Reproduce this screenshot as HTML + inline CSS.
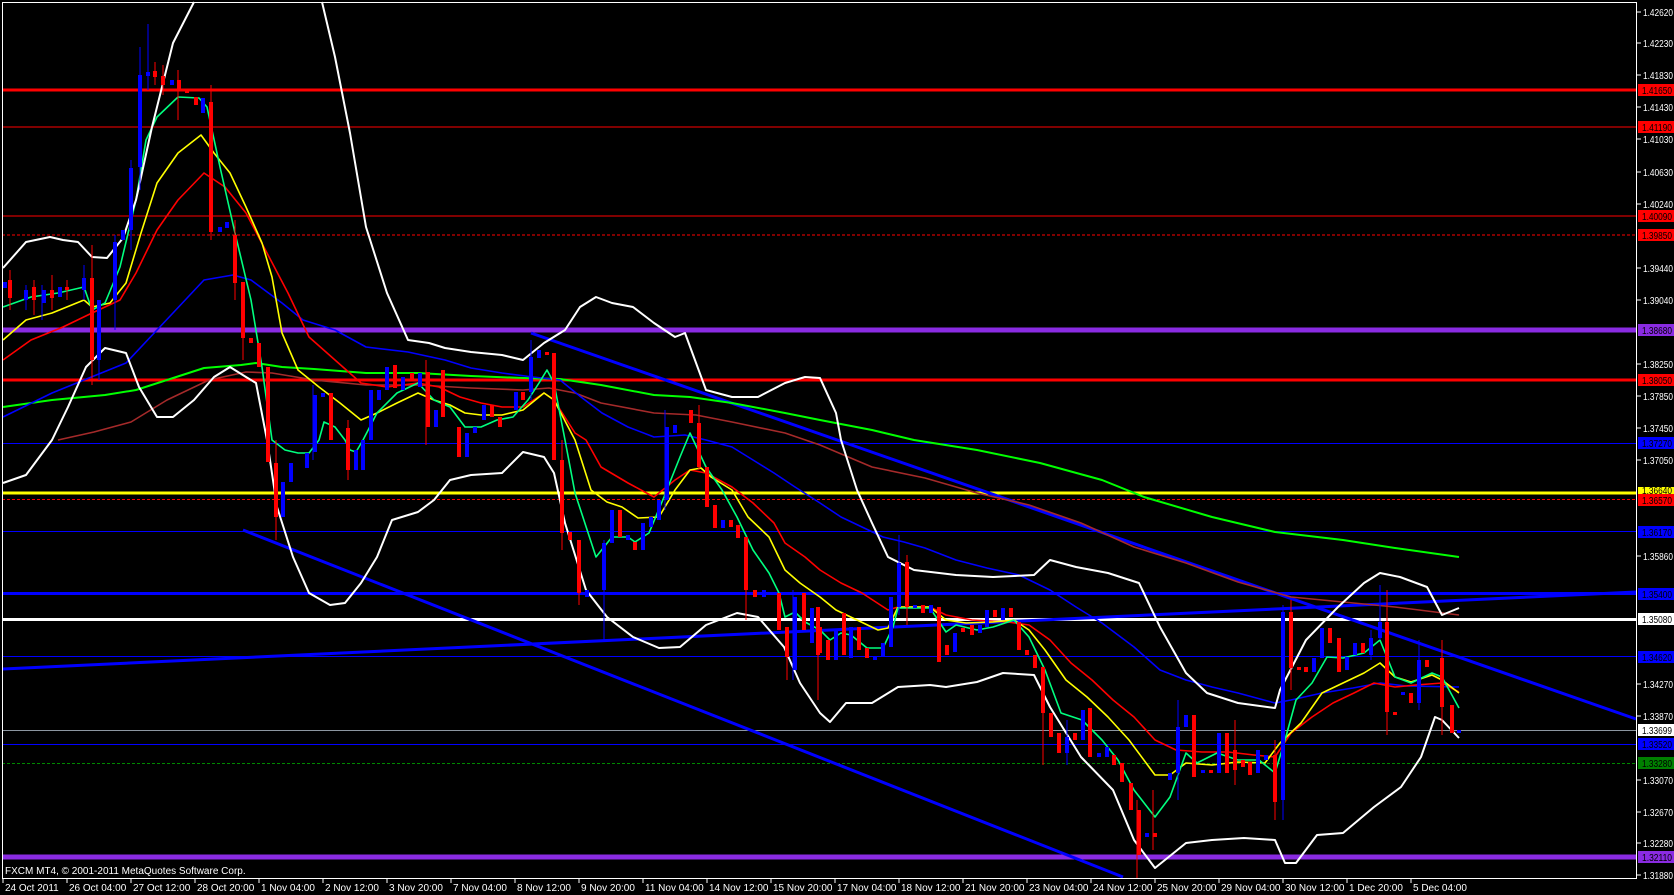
<!DOCTYPE html>
<html><head><meta charset="utf-8"><style>
html,body{margin:0;padding:0;background:#000;width:1674px;height:895px;overflow:hidden}
svg{display:block}
text{font-family:"Liberation Sans",sans-serif;font-size:10px}
</style></head><body>
<svg width="1674" height="895" viewBox="0 0 1674 895" xmlns="http://www.w3.org/2000/svg">
<rect width="1674" height="895" fill="#000"/>
<g fill="none">
<line x1="2" y1="90" x2="1636" y2="90" stroke="#f00" stroke-width="3"/>
<line x1="2" y1="127" x2="1636" y2="127" stroke="#f00" stroke-width="1"/>
<line x1="2" y1="216" x2="1636" y2="216" stroke="#f00" stroke-width="1"/>
<line x1="2" y1="235" x2="1636" y2="235" stroke="#f00" stroke-width="1" stroke-dasharray="3,2"/>
<line x1="2" y1="330" x2="1636" y2="330" stroke="#8a2be2" stroke-width="5"/>
<line x1="2" y1="380" x2="1636" y2="380" stroke="#f00" stroke-width="3"/>
<line x1="2" y1="443.5" x2="1636" y2="443.5" stroke="#00f" stroke-width="1"/>
<line x1="2" y1="493" x2="1636" y2="493" stroke="#ff0" stroke-width="3"/>
<line x1="2" y1="499.5" x2="1636" y2="499.5" stroke="#f00" stroke-width="1" stroke-dasharray="3,2"/>
<line x1="2" y1="531.5" x2="1636" y2="531.5" stroke="#00f" stroke-width="1"/>
<line x1="2" y1="593.5" x2="1636" y2="593.5" stroke="#00f" stroke-width="3"/>
<line x1="2" y1="619.5" x2="1636" y2="619.5" stroke="#fff" stroke-width="3"/>
<line x1="2" y1="656.5" x2="1636" y2="656.5" stroke="#00f" stroke-width="1"/>
<line x1="2" y1="730.5" x2="1636" y2="730.5" stroke="#8c96a0" stroke-width="1"/>
<line x1="2" y1="744.5" x2="1636" y2="744.5" stroke="#00f" stroke-width="1"/>
<line x1="2" y1="763.5" x2="1636" y2="763.5" stroke="#080" stroke-width="1" stroke-dasharray="3,2"/>
<line x1="2" y1="857" x2="1636" y2="857" stroke="#8a2be2" stroke-width="5"/>
</g>
<g stroke="#00f" stroke-width="3" fill="none">
<line x1="531" y1="333" x2="1636" y2="719"/>
<line x1="243" y1="530" x2="1123" y2="877"/>
<line x1="3" y1="669" x2="1636" y2="592"/>
</g>
<g fill="none" stroke-width="1.6" stroke-linejoin="round">
<polyline stroke="#a52a2a" points="58,440 94,432 131,422 167,400 209,380 246,372 272,373 314,380 366,385 418,385 471,388 523,390 549,388 575,393 601,403 654,413 696,415 732,422 785,433 820,445 872,467 925,478 977,493 1029,505 1081,523 1134,547 1186,563 1238,582 1291,597 1343,602 1395,607 1459,615"/>
<polyline stroke="#0f0" stroke-width="2" points="3,407 52,400 105,395 136,390 167,380 204,368 241,365 256,363 282,367 314,369 366,373 418,373 471,376 523,378 560,379 601,385 654,395 690,397 732,403 785,413 820,420 872,430 914,440 977,450 1040,463 1102,480 1144,497 1212,517 1275,532 1343,540 1395,548 1459,557"/>
<polyline stroke="#00f" points="3,417 52,393 84,380 126,363 157,330 204,280 233,275 251,280 282,303 303,320 335,330 366,347 408,352 445,360 471,368 502,373 533,377 560,380 581,397 602,413 628,427 654,437 685,435 706,440 732,447 753,460 774,473 795,487 820,503 841,517 862,527 883,537 904,542 925,548 956,560 987,568 1019,575 1050,590 1076,607 1102,623 1134,647 1160,670 1186,680 1212,687 1238,693 1275,703 1291,700 1322,693 1353,688 1380,683 1406,686 1459,687"/>
<polyline stroke="#f00" points="3,360 31,340 63,327 92,313 105,307 120,300 136,273 157,230 178,200 204,173 225,187 246,213 267,253 288,293 309,337 335,360 361,383 387,387 418,383 439,387 460,397 481,403 502,407 523,407 544,393 554,400 575,433 586,440 601,467 628,483 654,497 675,480 690,470 706,473 732,487 753,503 774,523 785,543 805,557 820,570 841,583 862,593 888,610 898,607 930,607 946,615 972,620 1008,622 1029,625 1050,640 1071,663 1092,680 1113,700 1134,717 1155,740 1176,750 1202,752 1228,752 1254,755 1275,757 1291,733 1312,717 1333,703 1354,693 1374,683 1395,687 1416,685 1442,683 1459,692"/>
<polyline stroke="#ff0" points="3,340 26,320 52,313 84,300 92,307 110,303 126,283 141,233 157,183 178,153 201,135 214,153 230,173 246,207 262,243 272,277 282,333 298,370 319,387 340,403 361,420 377,413 397,403 418,393 434,400 450,405 465,413 481,415 502,415 523,410 544,393 554,400 575,440 591,490 607,502 622,507 638,518 659,517 675,490 690,470 701,468 711,477 732,490 748,517 769,537 785,570 800,583 820,597 836,610 857,620 878,630 888,628 898,607 930,607 946,620 966,623 993,622 1014,620 1029,630 1045,650 1066,680 1087,697 1108,717 1129,740 1155,775 1170,775 1186,763 1212,765 1238,762 1265,763 1280,743 1301,723 1322,693 1343,683 1364,673 1380,663 1395,677 1411,682 1432,675 1442,680 1459,693"/>
<polyline stroke="#00ff7f" points="3,307 31,297 58,293 84,287 92,310 105,303 120,267 136,200 146,140 157,117 178,97 199,98 207,107 220,167 235,233 251,300 262,367 272,440 285,450 298,453 309,453 319,440 324,422 335,427 345,440 350,450 356,452 363,440 377,413 397,393 418,383 434,400 450,407 465,427 481,427 497,420 513,417 528,400 539,383 547,370 554,383 565,440 575,493 596,557 612,537 628,537 635,542 649,533 664,497 680,457 690,433 706,467 722,490 737,517 753,550 769,573 779,593 785,617 795,612 805,622 820,630 830,640 841,633 851,635 867,648 883,648 893,627 898,608 930,608 946,632 956,625 977,630 993,627 1014,620 1029,637 1045,670 1061,713 1082,720 1102,740 1118,760 1134,790 1155,817 1170,797 1186,753 1197,763 1217,753 1238,760 1259,760 1275,773 1285,740 1296,700 1312,683 1327,657 1343,658 1364,653 1380,640 1395,677 1411,683 1432,673 1442,677 1459,708"/>
</g>
<g fill="none" stroke="#fff" stroke-width="2" stroke-linejoin="round">
<polyline points="3,268 26,242 50,237 63,240 78,242 92,257 107,258 123,238 136,200 152,127 173,43 194,2"/>
<polyline points="322,2 335,57 350,133 366,227 387,293 408,340 429,343 445,348 471,352 502,355 523,360 544,343 565,330 580,307 596,297 612,303 633,307 654,323 675,337 685,333 706,390 732,397 758,397 785,383 805,377 820,378 836,413 841,440 857,490 872,523 888,557 914,570 956,575 993,577 1034,575 1050,560 1076,567 1108,573 1139,583 1160,627 1186,673 1207,693 1238,703 1275,708 1280,690 1306,640 1338,607 1364,583 1380,573 1400,577 1427,587 1442,615 1459,608"/>
<polyline points="3,483 26,475 52,440 68,407 86,367 105,348 126,353 139,387 157,417 173,417 194,400 214,377 230,367 246,377 256,383 267,440 277,507 293,557 309,593 330,605 345,603 361,583 377,557 392,520 418,512 434,500 450,480 471,475 502,473 523,452 544,457 554,473 565,523 586,590 607,617 633,637 659,648 680,647 706,625 737,613 758,617 784,647 800,683 820,713 830,722 846,703 872,703 898,687 930,685 946,687 977,682 1003,673 1034,675 1050,707 1081,757 1113,790 1134,840 1155,868 1186,843 1212,840 1244,838 1275,840 1285,863 1296,863 1317,835 1343,833 1374,807 1401,787 1421,757 1435,717 1442,720 1459,738"/>
</g>
<path fill="none" stroke="#f00" stroke-width="1" d="M92 245V385M211 85V240M235 220V300M243 282V360M276 440V540M699 405V470M746 537V620M787 627V680M818 640V700M1043 667V765M1137 800V880M1153 790V850M1275 740V820M1387 590V735M1442 640V735M1291 600V690M907 555V625M426 360V445M348 420V480M579 540V605M562 440V550M1235 720V785M178 70V120M163 65V95M155 62V85M10 270V310M34 280V315M52 275V310M67 280V300"/>
<path fill="none" stroke="#00f" stroke-width="1" d="M140 47V190M148 24V90M131 160V250M115 235V330M99 300V380M313 385V460M665 410V510M793 590V680M899 535V615M1283 605V820M1371 630V660M1380 585V640M1419 640V710M1178 700V800M1067 720V765M604 540V640M531 340V400M42 285V320M84 265V300M26 285V310"/>
<path fill="#f00" d="M90 278h4V360h-4ZM153 71h4V77h-4ZM161 76h4V85h-4ZM177 80h4V90h-4ZM185 90h4V93h-4ZM194 97h4V105h-4ZM209 102h4V232h-4ZM233 235h4V283h-4ZM241 282h4V338h-4ZM249 338h4V343h-4ZM257 343h4V367h-4ZM266 367h4V462h-4ZM8 280h4V298h-4ZM32 287h4V300h-4ZM50 290h4V298h-4ZM65 287h4V290h-4ZM274 463h4V517h-4ZM346 428h4V470h-4ZM552 353h4V460h-4ZM560 460h4V533h-4ZM568 532h4V540h-4ZM577 540h4V593h-4ZM618 510h4V537h-4ZM633 542h4V550h-4ZM697 423h4V467h-4ZM689 410h4V423h-4ZM705 467h4V507h-4ZM713 505h4V528h-4ZM729 520h4V527h-4ZM736 525h4V538h-4ZM744 537h4V590h-4ZM753 590h4V597h-4ZM777 593h4V630h-4ZM785 627h4V657h-4ZM802 593h4V630h-4ZM816 607h4V655h-4ZM329 393h4V440h-4ZM393 365h4V388h-4ZM410 373h4V380h-4ZM426 372h4V427h-4ZM441 370h4V417h-4ZM457 427h4V457h-4ZM490 405h4V417h-4ZM498 417h4V427h-4ZM521 392h4V400h-4ZM545 352h4V355h-4ZM818 627h4V653h-4ZM826 640h4V660h-4ZM842 613h4V655h-4ZM857 627h4V650h-4ZM865 648h4V658h-4ZM905 562h4V607h-4ZM921 605h4V613h-4ZM937 607h4V662h-4ZM945 645h4V655h-4ZM961 628h4V632h-4ZM970 625h4V635h-4ZM993 610h4V617h-4ZM1009 608h4V617h-4ZM1017 622h4V650h-4ZM1025 650h4V655h-4ZM1033 655h4V668h-4ZM1041 667h4V713h-4ZM1049 713h4V737h-4ZM1057 733h4V753h-4ZM1073 733h4V740h-4ZM1088 708h4V757h-4ZM1112 755h4V765h-4ZM1120 763h4V782h-4ZM1129 783h4V810h-4ZM1137 810h4V855h-4ZM1153 833h4V837h-4ZM1192 715h4V777h-4ZM1209 770h4V773h-4ZM1225 733h4V773h-4ZM1233 750h4V770h-4ZM1241 760h4V767h-4ZM1248 762h4V775h-4ZM1273 755h4V802h-4ZM1289 612h4V668h-4ZM1297 667h4V670h-4ZM1304 667h4V672h-4ZM1328 628h4V643h-4ZM1337 638h4V672h-4ZM1361 643h4V653h-4ZM1385 622h4V712h-4ZM1393 712h4V715h-4ZM1409 693h4V703h-4ZM1425 660h4V667h-4ZM1440 658h4V707h-4ZM1450 705h4V733h-4Z"/>
<path fill="#00f" d="M97 300h4V360h-4ZM113 242h4V300h-4ZM121 230h4V240h-4ZM129 168h4V230h-4ZM138 75h4V167h-4ZM146 72h4V76h-4ZM170 80h4V85h-4ZM201 98h4V113h-4ZM218 227h4V232h-4ZM225 222h4V228h-4ZM3 282h4V288h-4ZM24 290h4V300h-4ZM42 290h4V303h-4ZM58 287h4V297h-4ZM82 278h4V290h-4ZM281 482h4V517h-4ZM289 463h4V482h-4ZM305 453h4V468h-4ZM313 395h4V452h-4ZM321 393h4V397h-4ZM354 450h4V470h-4ZM361 440h4V470h-4ZM369 390h4V440h-4ZM377 390h4V400h-4ZM385 367h4V390h-4ZM401 377h4V390h-4ZM418 373h4V387h-4ZM434 410h4V427h-4ZM465 433h4V457h-4ZM473 427h4V433h-4ZM482 405h4V420h-4ZM514 392h4V410h-4ZM529 357h4V392h-4ZM537 350h4V358h-4ZM585 590h4V597h-4ZM602 543h4V590h-4ZM610 510h4V543h-4ZM626 535h4V540h-4ZM641 523h4V550h-4ZM649 517h4V527h-4ZM657 500h4V520h-4ZM665 427h4V500h-4ZM673 425h4V433h-4ZM721 520h4V528h-4ZM762 590h4V597h-4ZM793 597h4V670h-4ZM810 608h4V643h-4ZM834 630h4V660h-4ZM849 627h4V658h-4ZM873 657h4V660h-4ZM881 643h4V657h-4ZM889 597h4V647h-4ZM897 563h4V607h-4ZM913 605h4V608h-4ZM929 605h4V613h-4ZM953 633h4V652h-4ZM978 625h4V633h-4ZM985 610h4V627h-4ZM1001 608h4V620h-4ZM1065 737h4V753h-4ZM1081 710h4V740h-4ZM1097 753h4V757h-4ZM1105 747h4V757h-4ZM1145 833h4V837h-4ZM1168 773h4V780h-4ZM1176 727h4V773h-4ZM1184 715h4V727h-4ZM1201 770h4V773h-4ZM1217 733h4V773h-4ZM1256 750h4V773h-4ZM1264 755h4V760h-4ZM1281 612h4V800h-4ZM1312 658h4V672h-4ZM1320 628h4V658h-4ZM1345 657h4V670h-4ZM1353 643h4V655h-4ZM1369 638h4V655h-4ZM1378 622h4V638h-4ZM1401 692h4V695h-4ZM1417 660h4V703h-4ZM1457 730h4V733h-4Z"/>
<rect x="2.5" y="2.5" width="1634" height="876" fill="none" stroke="#fff" stroke-width="1"/>
<rect x="1637" y="0" width="37" height="895" fill="#000"/>
<line x1="1636.5" y1="2" x2="1636.5" y2="879" stroke="#fff"/>
<rect x="0" y="879" width="1674" height="16" fill="#000"/>
<line x1="2" y1="878.5" x2="1637" y2="878.5" stroke="#fff"/>
<text x="5" y="874" fill="#fff">FXCM MT4, © 2001-2011 MetaQuotes Software Corp.</text>
<g stroke="#fff"><path d="M1637 12h4M1637 43h4M1637 75h4M1637 107h4M1637 139h4M1637 172h4M1637 204h4M1637 268h4M1637 300h4M1637 364h4M1637 396h4M1637 428h4M1637 460h4M1637 556h4M1637 684h4M1637 716h4M1637 780h4M1637 812h4M1637 843h4M1637 875h4"/></g>
<g fill="#fff">
<text x="1643" y="16" textLength="30" lengthAdjust="spacingAndGlyphs">1.42620</text><text x="1643" y="47" textLength="30" lengthAdjust="spacingAndGlyphs">1.42230</text><text x="1643" y="79" textLength="30" lengthAdjust="spacingAndGlyphs">1.41830</text><text x="1643" y="111" textLength="30" lengthAdjust="spacingAndGlyphs">1.41430</text><text x="1643" y="143" textLength="30" lengthAdjust="spacingAndGlyphs">1.41030</text><text x="1643" y="176" textLength="30" lengthAdjust="spacingAndGlyphs">1.40630</text><text x="1643" y="208" textLength="30" lengthAdjust="spacingAndGlyphs">1.40240</text><text x="1643" y="272" textLength="30" lengthAdjust="spacingAndGlyphs">1.39440</text><text x="1643" y="304" textLength="30" lengthAdjust="spacingAndGlyphs">1.39040</text><text x="1643" y="368" textLength="30" lengthAdjust="spacingAndGlyphs">1.38250</text><text x="1643" y="400" textLength="30" lengthAdjust="spacingAndGlyphs">1.37850</text><text x="1643" y="432" textLength="30" lengthAdjust="spacingAndGlyphs">1.37450</text><text x="1643" y="464" textLength="30" lengthAdjust="spacingAndGlyphs">1.37050</text><text x="1643" y="560" textLength="30" lengthAdjust="spacingAndGlyphs">1.35860</text><text x="1643" y="688" textLength="30" lengthAdjust="spacingAndGlyphs">1.34270</text><text x="1643" y="720" textLength="30" lengthAdjust="spacingAndGlyphs">1.33870</text><text x="1643" y="784" textLength="30" lengthAdjust="spacingAndGlyphs">1.33070</text><text x="1643" y="816" textLength="30" lengthAdjust="spacingAndGlyphs">1.32670</text><text x="1643" y="847" textLength="30" lengthAdjust="spacingAndGlyphs">1.32280</text><text x="1643" y="879" textLength="30" lengthAdjust="spacingAndGlyphs">1.31880</text>
</g>
<g>
<rect x="1638" y="84" width="36" height="12" fill="#f00"/><text x="1642" y="94" fill="#000" textLength="30" lengthAdjust="spacingAndGlyphs">1.41650</text>
<rect x="1638" y="121" width="36" height="12" fill="#f00"/><text x="1642" y="131" fill="#000" textLength="30" lengthAdjust="spacingAndGlyphs">1.41190</text>
<rect x="1638" y="210" width="36" height="12" fill="#f00"/><text x="1642" y="220" fill="#000" textLength="30" lengthAdjust="spacingAndGlyphs">1.40090</text>
<rect x="1638" y="229" width="36" height="12" fill="#f00"/><text x="1642" y="239" fill="#000" textLength="30" lengthAdjust="spacingAndGlyphs">1.39850</text>
<rect x="1638" y="324" width="36" height="12" fill="#8a2be2"/><text x="1642" y="334" fill="#000" textLength="30" lengthAdjust="spacingAndGlyphs">1.38680</text>
<rect x="1638" y="374" width="36" height="12" fill="#f00"/><text x="1642" y="384" fill="#000" textLength="30" lengthAdjust="spacingAndGlyphs">1.38050</text>
<rect x="1638" y="437" width="36" height="12" fill="#00f"/><text x="1642" y="447" fill="#000" textLength="30" lengthAdjust="spacingAndGlyphs">1.37270</text>
<rect x="1638" y="487" width="36" height="8" fill="#ff0"/><text x="1642" y="494" fill="#000" textLength="30" lengthAdjust="spacingAndGlyphs">1.36640</text>
<rect x="1638" y="494" width="36" height="12" fill="#f00"/><text x="1642" y="504" fill="#000" textLength="30" lengthAdjust="spacingAndGlyphs">1.36570</text>
<rect x="1638" y="526" width="36" height="12" fill="#00f"/><text x="1642" y="536" fill="#000" textLength="30" lengthAdjust="spacingAndGlyphs">1.36170</text>
<rect x="1638" y="588" width="36" height="12" fill="#00f"/><text x="1642" y="598" fill="#000" textLength="30" lengthAdjust="spacingAndGlyphs">1.35400</text>
<rect x="1638" y="613" width="36" height="12" fill="#fff"/><text x="1642" y="623" fill="#000" textLength="30" lengthAdjust="spacingAndGlyphs">1.35080</text>
<rect x="1638" y="651" width="36" height="12" fill="#00f"/><text x="1642" y="661" fill="#000" textLength="30" lengthAdjust="spacingAndGlyphs">1.34620</text>
<rect x="1638" y="724" width="36" height="12" fill="#fff"/><text x="1642" y="734" fill="#000" textLength="30" lengthAdjust="spacingAndGlyphs">1.33699</text>
<rect x="1638" y="738" width="36" height="12" fill="#00f"/><text x="1642" y="748" fill="#000" textLength="30" lengthAdjust="spacingAndGlyphs">1.33520</text>
<rect x="1638" y="757" width="36" height="12" fill="#008000"/><text x="1642" y="767" fill="#000" textLength="30" lengthAdjust="spacingAndGlyphs">1.33280</text>
<rect x="1638" y="851" width="36" height="12" fill="#8a2be2"/><text x="1642" y="861" fill="#000" textLength="30" lengthAdjust="spacingAndGlyphs">1.32110</text>
</g>
<g stroke="#fff"><path d="M3 879v4M67 879v4M131 879v4M195 879v4M259 879v4M323 879v4M387 879v4M451 879v4M515 879v4M579 879v4M643 879v4M707 879v4M771 879v4M835 879v4M899 879v4M963 879v4M1027 879v4M1091 879v4M1155 879v4M1219 879v4M1283 879v4M1347 879v4M1411 879v4"/></g>
<g fill="#fff">
<text x="5" y="891">24 Oct 2011</text><text x="69" y="891">26 Oct 04:00</text><text x="133" y="891">27 Oct 12:00</text><text x="197" y="891">28 Oct 20:00</text><text x="261" y="891">1 Nov 04:00</text><text x="325" y="891">2 Nov 12:00</text><text x="389" y="891">3 Nov 20:00</text><text x="453" y="891">7 Nov 04:00</text><text x="517" y="891">8 Nov 12:00</text><text x="581" y="891">9 Nov 20:00</text><text x="645" y="891">11 Nov 04:00</text><text x="709" y="891">14 Nov 12:00</text><text x="773" y="891">15 Nov 20:00</text><text x="837" y="891">17 Nov 04:00</text><text x="901" y="891">18 Nov 12:00</text><text x="965" y="891">21 Nov 20:00</text><text x="1029" y="891">23 Nov 04:00</text><text x="1093" y="891">24 Nov 12:00</text><text x="1157" y="891">25 Nov 20:00</text><text x="1221" y="891">29 Nov 04:00</text><text x="1285" y="891">30 Nov 12:00</text><text x="1349" y="891">1 Dec 20:00</text><text x="1413" y="891">5 Dec 04:00</text>
</g>
</svg>
</body></html>
